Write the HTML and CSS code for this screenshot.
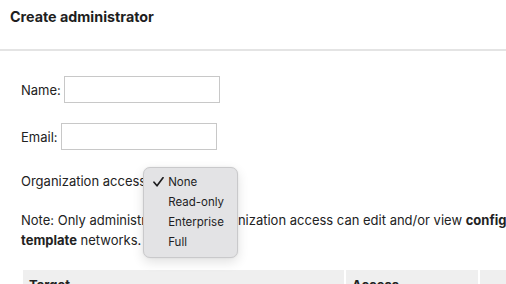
FILE: index.html
```html
<!DOCTYPE html>
<html>
<head>
<meta charset="utf-8">
<link rel="stylesheet" href="styles.css">
</head>
<body>
<div class="page">
  <header class="head">
    <h1 class="title">Create administrator</h1>
  </header>
  <form class="form">
    <div class="row">
      <label class="lbl">Name:</label>
      <input class="inp name" type="text">
    </div>
    <div class="row">
      <label class="lbl">Email:</label>
      <input class="inp" type="text">
    </div>
    <div class="row org">
      <label class="lbl">Organization access</label>
      <div class="selwrap">
        <div class="sel">None</div>
        <div class="menu">
          <div class="item"><svg class="check" width="11" height="10" viewBox="0 0 11 10"><path d="M1 5.2 L4 8.8 L10 0.8" fill="none" stroke="#1d1d1f" stroke-width="1.7" stroke-linecap="round" stroke-linejoin="round"/></svg>None</div>
          <div class="item">Read-only</div>
          <div class="item">Enterprise</div>
          <div class="item">Full</div>
        </div>
      </div>
    </div>
    <p class="note">Note: Only administrators with organization access can edit and/or view <b>configuration template</b> networks.</p>
    <table class="tbl">
      <thead>
        <tr><th class="c1">Target</th><th class="c2">Access</th><th class="c3"></th></tr>
      </thead>
    </table>
  </form>
</div>
</body>
</html>
```

FILE: styles.css
```css
html, body {
  margin: 0;
  padding: 0;
  overflow: hidden;
  background: #fff;
}
body {
  font-family: Inter, "Liberation Sans", sans-serif;
  color: #222;
  font-size: 13px;
}
.page {
  width: 640px;
}
.head {
  height: 49px;
  border-bottom: 2px solid #e4e4e4;
  box-sizing: content-box;
  width: 506px;
}
.title {
  margin: 0;
  padding: 8px 0 0 10px;
  font-size: 14.3px;
  font-weight: 700;
  line-height: 18px;
  color: #1e1e1e;
}
.form {
  padding: 25px 0 0 21px;
  width: 560px;
}
.row {
  display: flex;
  align-items: center;
  gap: 3px;
  height: 27px;
  margin-bottom: 20px;
}
.lbl {
  line-height: 18px;
}
.inp {
  width: 156px;
  height: 27px;
  box-sizing: border-box;
  border: 1px solid #c8c8c8;
  margin: 0;
  padding: 0 4px;
  font: inherit;
  background: #fff;
}
.org {
  height: 24px;
  margin-top: -1px;
  margin-bottom: 0;
  gap: 4px;
}
.selwrap {
  position: relative;
  height: 22px;
  width: 80px;
}
.sel {
  height: 22px;
  line-height: 22px;
  padding-left: 6px;
  font-size: 12px;
}
.menu {
  position: absolute;
  left: -7px;
  top: -3px;
  width: 95px;
  height: 91px;
  box-sizing: border-box;
  padding: 4px 0 0 0;
  background: #e3e3e5;
  border: 1px solid #c9c9cb;
  border-radius: 7px;
  box-shadow: 0 4px 12px rgba(0,0,0,0.12), 0 0 2px rgba(0,0,0,0.08);
  font-family: Inter, "Liberation Sans", sans-serif;
  font-size: 11.5px;
  color: #1d1d1f;
}
.item {
  position: relative;
  height: 20px;
  line-height: 20px;
  padding-left: 24px;
}
.check {
  position: absolute;
  left: 9px;
  top: 5px;
}
.note {
  margin: 17px 0 0 0;
  line-height: 20px;
}
.tbl {
  margin-top: 18px;
  margin-left: 0;
  border-spacing: 2px;
  width: 520px;
}
.tbl th {
  background: #efefef;
  text-align: left;
  font-weight: 700;
  padding: 5px 6px 6px;
  height: 20px;
}
.c1 { width: 309px; }
.c2 { width: 120px; }
```
